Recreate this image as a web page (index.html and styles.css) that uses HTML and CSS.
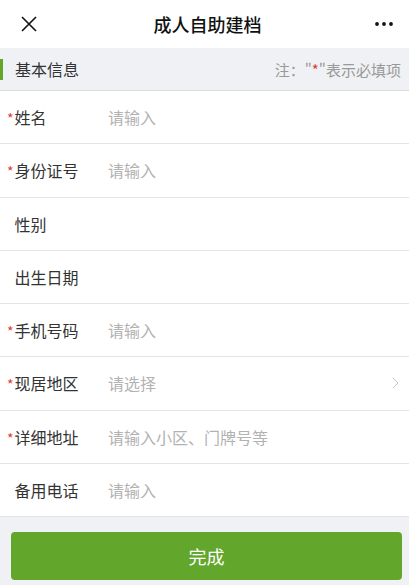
FILE: index.html
```html
<!DOCTYPE html>
<html lang="zh-CN">
  <head>
    <meta charset="UTF-8" />
    <meta name="viewport" content="width=device-width, initial-scale=1.0" />
    <link rel="stylesheet" href="styles.css">
  </head>
  <body>
    <div class="nav">
      <svg class="nav-close" width="16" height="16" viewBox="0 0 16 16">
        <path d="M1 1L15 15M15 1L1 15" stroke="#111" stroke-width="1.6" fill="none" />
      </svg>
      <div class="nav-title">成人自助建档</div>
      <svg class="nav-more" width="18" height="4" viewBox="0 0 18 4">
        <circle cx="2" cy="2" r="1.9" fill="#111" />
        <circle cx="9" cy="2" r="1.9" fill="#111" />
        <circle cx="16" cy="2" r="1.9" fill="#111" />
      </svg>
    </div>

    <div class="section-head">
      <div class="section-title">基本信息</div>
      <div class="section-note">注：&quot;<span class="star">*</span>&quot;表示必填项</div>
    </div>

    <div class="form">
      <div class="form-row">
        <div class="form-label"><span class="star">*</span>姓名</div>
        <div class="form-value">请输入</div>
      </div>
      <div class="form-row">
        <div class="form-label"><span class="star">*</span>身份证号</div>
        <div class="form-value">请输入</div>
      </div>
      <div class="form-row">
        <div class="form-label"><span class="star blank">*</span>性别</div>
        <div class="form-value"></div>
      </div>
      <div class="form-row">
        <div class="form-label"><span class="star blank">*</span>出生日期</div>
        <div class="form-value"></div>
      </div>
      <div class="form-row">
        <div class="form-label"><span class="star">*</span>手机号码</div>
        <div class="form-value">请输入</div>
      </div>
      <div class="form-row">
        <div class="form-label"><span class="star">*</span>现居地区</div>
        <div class="form-value">请选择</div>
        <svg class="arrow" width="7" height="12" viewBox="0 0 7 12">
          <path d="M1 1L6 6L1 11" stroke="#c8c8c8" stroke-width="1" fill="none" />
        </svg>
      </div>
      <div class="form-row">
        <div class="form-label"><span class="star">*</span>详细地址</div>
        <div class="form-value">请输入小区、门牌号等</div>
      </div>
      <div class="form-row">
        <div class="form-label"><span class="star blank">*</span>备用电话</div>
        <div class="form-value">请输入</div>
      </div>
    </div>

    <div class="footer">
      <button class="btn-done">完成</button>
    </div>
  </body>
</html>
```

FILE: styles.css
```css
* {
  box-sizing: border-box;
}

body {
  margin: 0;
  background-color: #fff;
  font-family: "Noto Sans CJK SC", "Noto Sans", sans-serif;
  color: #333;
}

/* 顶部导航 */
.nav {
  height: 48px;
  display: flex;
  align-items: center;
  padding: 0 16px 0 21px;
  background-color: #fff;
}

.nav-close {
  flex: none;
}

.nav-title {
  flex: 1;
  text-align: center;
  font-size: 18px;
  font-weight: 500;
  color: #111;
  padding-left: 3px;
}

.nav-more {
  flex: none;
}

/* 分组标题 */
.section-head {
  height: 43px;
  display: flex;
  align-items: center;
  justify-content: space-between;
  padding: 0 8px 0 15px;
  background-color: #eff1f4;
  border-bottom: 1px solid #dcdcdc;
  position: relative;
}

.section-head::before {
  content: "";
  position: absolute;
  left: 0;
  top: 11px;
  width: 3px;
  height: 21px;
  background-color: #63a62c;
}

.section-title {
  font-size: 16px;
  color: #333;
}

.section-note {
  font-size: 15px;
  color: #999;
}

.star {
  color: #e03b3b;
}

.star.blank {
  visibility: hidden;
}

/* 表单行 */
.form-row {
  height: 53.25px;
  display: flex;
  align-items: center;
  padding: 0 10px 0 7px;
  border-bottom: 1.5px solid #e4e4e4;
}

.form-label {
  width: 101px;
  font-size: 16px;
  color: #333;
}

.form-label .star {
  font-size: 14px;
  margin-right: 1px;
}

.form-value {
  flex: 1;
  font-size: 16px;
  color: #b2b2b2;
}

.arrow {
  flex: none;
}

/* 底部按钮 */
.footer {
  background-color: #eff1f4;
  padding: 15px 7px 5px 11px;
}

.btn-done {
  display: block;
  width: 100%;
  height: 48px;
  border: none;
  border-radius: 4px;
  background-color: #63a62c;
  color: #fff;
  font-size: 18px;
  font-family: inherit;
}
```
